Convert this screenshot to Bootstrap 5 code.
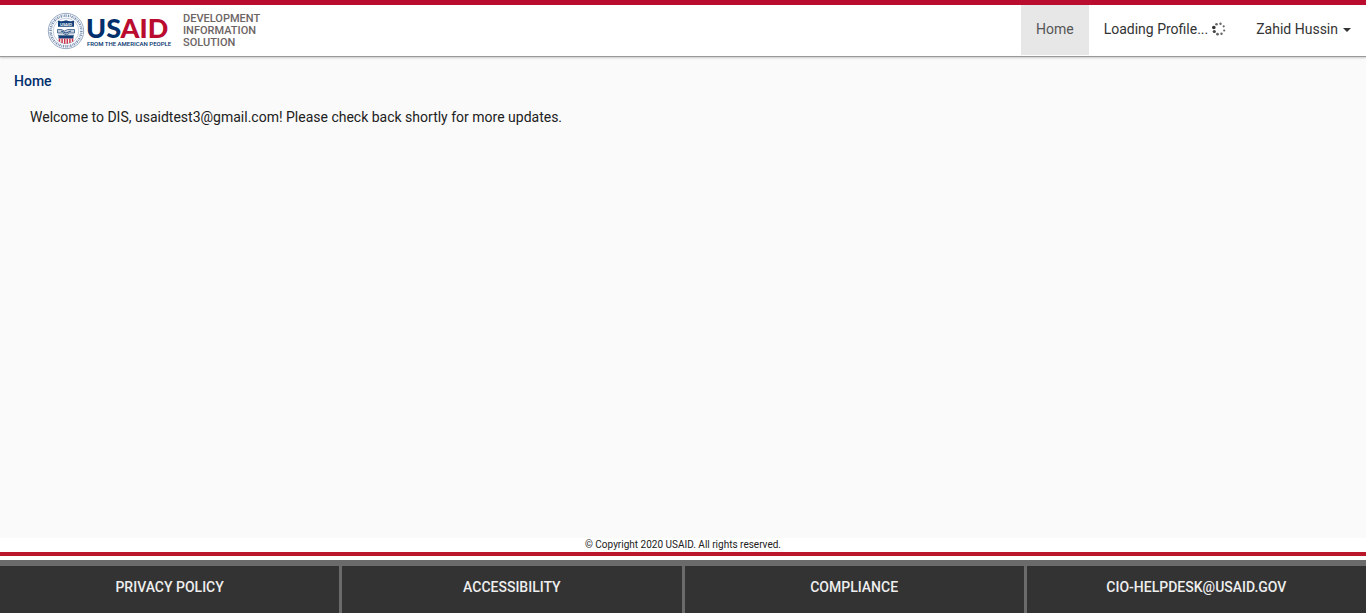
<!DOCTYPE html>
<html lang="en">
<head>
<meta charset="utf-8">
<meta name="viewport" content="width=device-width, initial-scale=1">
<title>Development Information Solution</title>
<link href="https://cdn.jsdelivr.net/npm/bootstrap@5.3.0/dist/css/bootstrap.min.css" rel="stylesheet">
<style>
  body { font-family: Roboto, "Liberation Sans", sans-serif; font-size: 14px; line-height: 20px; color: #212121; background: #fafafa; }
  .topbar { border-top: 5px solid #ba0c2f; border-bottom: 1px solid #999; box-shadow: 0 1px 2px rgba(0,0,0,.2); min-height: 57px; }
  .brand { padding: 7px 0 0 47px; }
  .seal { width: 38px; height: 38px; }
  .wordmark { font-family: Lato, sans-serif; color: #002f6c; padding: 2px 0 0 1px; width: 98px; }
  .wordmark-name { font-size: 27px; line-height: 27px; font-weight: 900; }
  .wordmark-name span { color: #ba0c2f; }
  .wordmark-tag { font-family: Roboto, sans-serif; font-size: 6px; line-height: 6px; font-weight: 500; white-space: nowrap; padding-left: 1px; }
  .product { font-size: 11px; line-height: 12px; font-weight: 500; color: #6c6463; padding-top: 1px; }
  .topnav .nav-link { padding: 14px 15px 16px; color: #333; font-size: 14px; line-height: 20px; }
  .topnav .nav-link.active { background: #e7e7e7; color: #555; }
  .topnav .dropdown-toggle::after { border-top: 4px solid; border-left: 4px solid transparent; border-right: 4px solid transparent; margin-left: 5px; vertical-align: 2px; }
  .spinner-dots { width: 14px; height: 14px; margin-left: 4px; }
  .page-title { font-size: 14px; line-height: 20px; font-weight: 500; color: #002f6c; padding: 14px 14px 16px; }
  .welcome { padding: 0 30px; }
  .copyright { font-size: 10px; line-height: 14px; background: #fff; border-bottom: 4px solid #ba172b; }
  .footer-links { margin-top: 4px; border-top: 6px solid #6b6b6b; background: #6b6b6b; display: grid; grid-template-columns: repeat(4, 1fr); gap: 3px; }
  .footer-links a { background: #333; color: #eee; font-weight: 500; text-align: center; padding: 11px 0 16px; }
</style>
</head>
<body class="d-flex flex-column min-vh-100">
<header class="topbar bg-white d-flex justify-content-between">
  <a href="#" class="brand d-flex text-decoration-none">
    <svg class="seal" viewBox="0 0 38 38" role="img" aria-label="USAID seal">
      <circle cx="19" cy="19" r="17.7" fill="#fff" stroke="#7f95b5" stroke-width=".8"/>
      <circle cx="19" cy="19" r="15.4" fill="none" stroke="#7c92b4" stroke-width="2.6" stroke-dasharray="1.3 .8 .7 .9"/>
      <circle cx="19" cy="19" r="12.8" fill="#fff" stroke="#a9b8ce" stroke-width=".7"/>
      <path d="M11 8.800q4 1 8-.6 4 1.600 8 .6v6H11z" fill="#12407b"/>
      <text x="19" y="13.500" font-size="4" font-weight="700" font-family="Lato" text-anchor="middle" fill="#fff">USAID</text>
      <path d="M10.500 17.500h4l3 1.500 3-1.500h7v3.500h-5l-3 2-4-2h-5z" fill="#c2cddd" stroke="#355985" stroke-width=".8"/>
      <path d="M14 19l5 2 5-2M11 23.300h16" fill="none" stroke="#2c5081" stroke-width="1"/>
      <path d="M11.500 24h15v2.500h-15z" fill="#123d76"/>
      <path d="M12.500 26.500v3.300M15.100 26.500v4.500M17.700 26.500v5.300M20.300 26.500v5.300M22.900 26.500v4.500M25.500 26.500v3.300" stroke="#c9354e" stroke-width="1.500"/>
    </svg>
    <span class="wordmark d-flex flex-column">
      <span class="wordmark-name">US<span>AID</span></span>
      <span class="wordmark-tag">FROM THE AMERICAN PEOPLE</span>
    </span>
    <span class="product">DEVELOPMENT<br>INFORMATION<br>SOLUTION</span>
  </a>
  <nav class="topnav nav flex-nowrap align-items-start" aria-label="Main">
    <a class="nav-link active" href="#" aria-current="page">Home</a>
    <a class="nav-link d-flex align-items-center" href="#">Loading Profile...
      <svg class="spinner-dots" viewBox="0 0 14 14" fill="#666" aria-hidden="true">
        <circle cx="1.800" cy="5.500" r="1.800" fill="#333"/><circle cx="2.300" cy="9.500" r="1.600" fill="#444"/>
        <circle cx="5.500" cy="12.200" r="1.400"/><circle cx="9.500" cy="11.700" r="1.200"/>
        <circle cx="12.200" cy="8.500" r="1.100"/><circle cx="11.700" cy="4.300" r="1.100"/>
        <circle cx="8.500" cy="1.700" r="1.200"/><circle cx="4.500" cy="2.300" r="1.300"/>
      </svg></a>
    <button class="nav-link dropdown-toggle border-0 bg-transparent" type="button" data-bs-toggle="dropdown" aria-expanded="false">Zahid Hussin</button>
  </nav>
</header>
<main class="flex-grow-1">
  <h1 class="page-title m-0">Home</h1>
  <p class="welcome m-0">Welcome to DIS, usaidtest3@gmail.com! Please check back shortly for more updates.</p>
</main>
<footer class="bg-white">
  <div class="copyright text-center">© Copyright 2020 USAID. All rights reserved.</div>
  <nav class="footer-links" aria-label="Footer">
    <a class="text-decoration-none" href="#">PRIVACY POLICY</a>
    <a class="text-decoration-none" href="#">ACCESSIBILITY</a>
    <a class="text-decoration-none" href="#">COMPLIANCE</a>
    <a class="text-decoration-none" href="mailto:CIO-HELPDESK@USAID.GOV">CIO-HELPDESK@USAID.GOV</a>
  </nav>
</footer>
<script src="https://cdn.jsdelivr.net/npm/bootstrap@5.3.0/dist/js/bootstrap.bundle.min.js"></script>
</body>
</html>
